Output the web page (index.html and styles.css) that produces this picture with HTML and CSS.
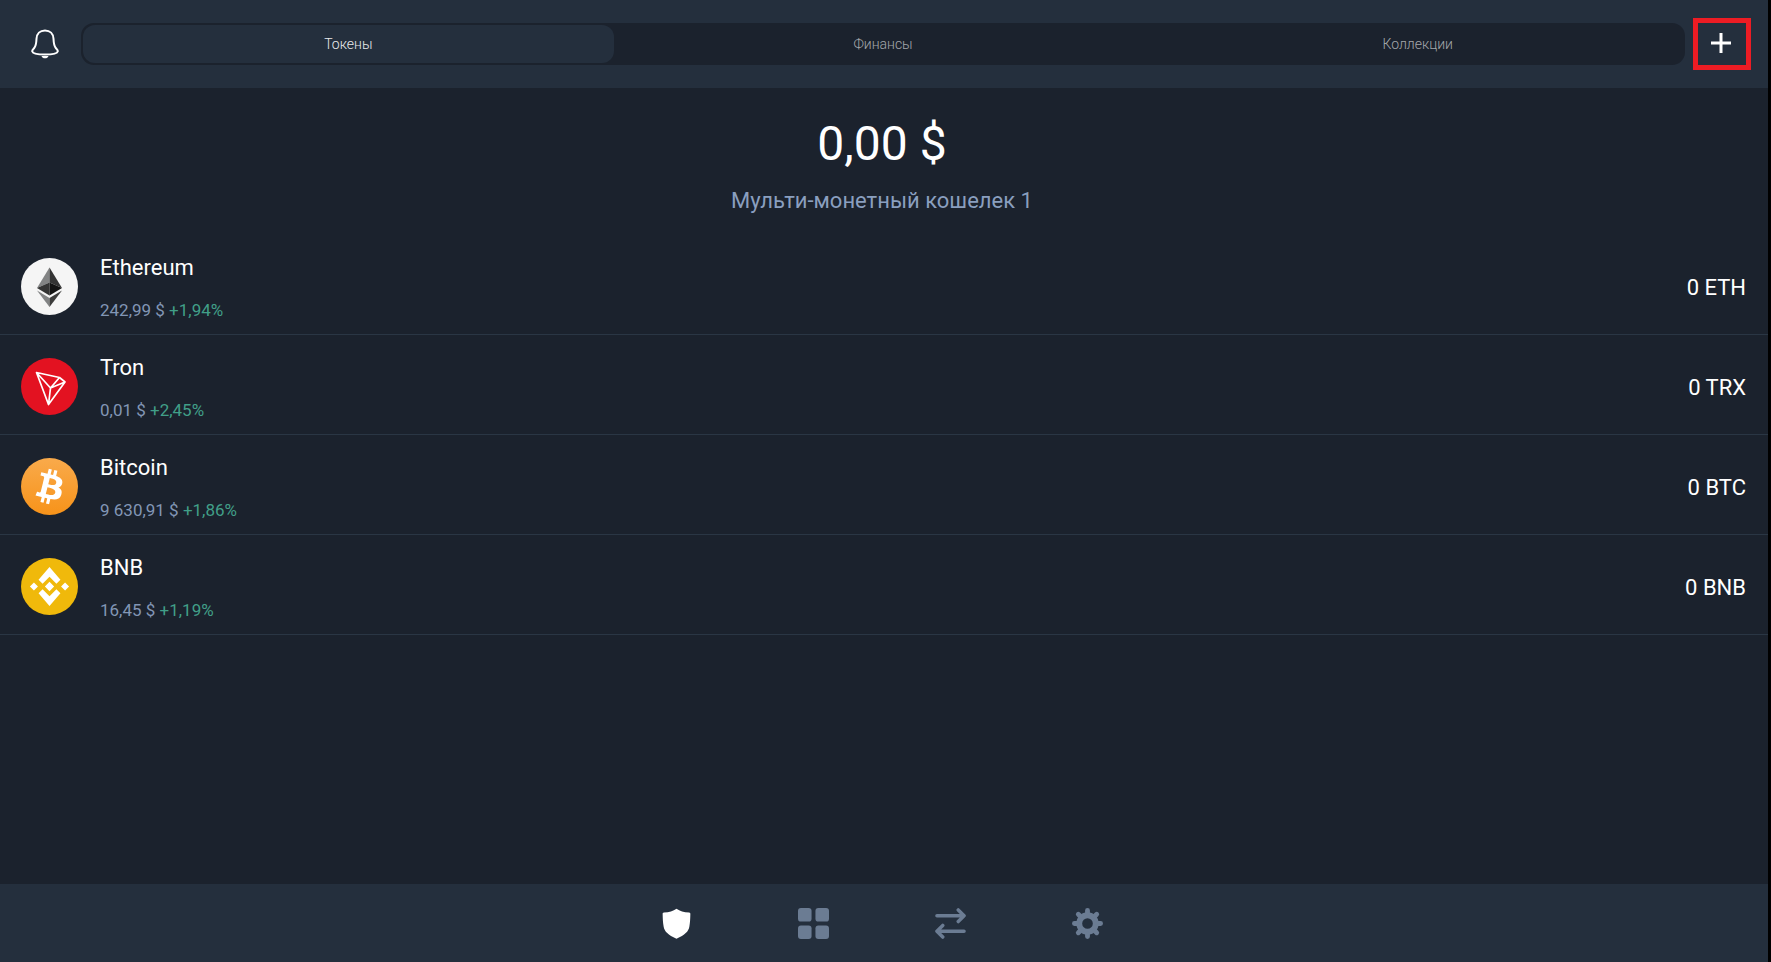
FILE: index.html
```html
<!DOCTYPE html>
<html lang="ru">
<head>
    <meta charset="UTF-8">
    <meta name="viewport" content="width=device-width, initial-scale=1.0">
    <title>Кошелек</title>
    <link rel="stylesheet" href="styles.css">
</head>
<body>
    <!-- Top bar -->
    <header class="top-bar">
        <button class="bell-button" type="button" aria-label="Уведомления">
            <svg width="28" height="30" viewBox="0 0 28 30">
                <path d="M14 1.5c-5 0-8.300 3.300-8.500 8.300-.2 5-.3 7-2.300 9.200C1.800 20.700 1 21.300 1.200 22.400c.4 2 6 3.200 12.800 3.200s12.400-1.200 12.800-3.200c.2-1.100-.6-1.700-2-3.400-2-2.200-2.100-4.200-2.300-9.200C22.300 4.800 19 1.500 14 1.500z" fill="none" stroke="#fff" stroke-width="2"/>
                <path d="M10.500 27h7c-.5 1.500-1.800 2.300-3.500 2.300s-3-.8-3.500-2.300z" fill="#fff"/>
            </svg>
        </button>
        <nav class="tabs">
            <button class="tab active" type="button">Токены</button>
            <button class="tab" type="button">Финансы</button>
            <button class="tab" type="button">Коллекции</button>
        </nav>
        <button class="add-button" type="button" aria-label="Добавить">
            <svg width="20" height="20" viewBox="0 0 20 20">
                <path d="M10 0v20M0 10h20" stroke="#fff" stroke-width="3"/>
            </svg>
        </button>
    </header>

    <main class="content">
        <!-- Balance -->
        <section class="balance">
            <h1>0,00 $</h1>
            <p>Мульти-монетный кошелек 1</p>
        </section>

        <!-- Token list -->
        <ul class="tokens">
            <li class="token">
                <svg class="coin" viewBox="0 0 57 57">
                    <circle cx="28.5" cy="28.5" r="28.5" fill="#f5f5f5"/>
                    <path d="M28.5 9.500L16 30l12.500-5.500z" fill="#828384"/>
                    <path d="M28.5 9.500L41 30l-12.500-5.500z" fill="#343434"/>
                    <path d="M16 30l12.500-5.500v13z" fill="#343434"/>
                    <path d="M41 30l-12.500-5.500v13z" fill="#131313"/>
                    <path d="M16 32.500l12.500 7.500v9z" fill="#828384"/>
                    <path d="M41 32.500L28.500 40v9z" fill="#3c3c3b"/>
                </svg>
                <div class="token-info">
                    <h2>Ethereum</h2>
                    <p>242,99 $ <span class="change">+1,94%</span></p>
                </div>
                <span class="amount">0 ETH</span>
            </li>
            <li class="token">
                <svg class="coin" viewBox="0 0 57 57">
                    <circle cx="28.5" cy="28.5" r="28.5" fill="#e31221"/>
                    <path d="M15.500 14.500L38.500 19.500 44 24 27.500 46.500zM15.500 14.500L29.500 30 44 24M29.500 30L38.500 19.500M29.500 30L27.500 46.500" fill="none" stroke="#fff" stroke-width="1.7" stroke-linejoin="round"/>
                </svg>
                <div class="token-info">
                    <h2>Tron</h2>
                    <p>0,01 $ <span class="change">+2,45%</span></p>
                </div>
                <span class="amount">0 TRX</span>
            </li>
            <li class="token">
                <svg class="coin" viewBox="0 0 32 32">
                    <defs>
                        <linearGradient id="btc" x1="0" y1="0" x2="0" y2="1">
                            <stop offset="0" stop-color="#f9aa4b"/>
                            <stop offset="1" stop-color="#f7931a"/>
                        </linearGradient>
                    </defs>
                    <circle cx="16" cy="16" r="16" fill="url(#btc)"/>
                    <path d="M23.189 14.020c.314-2.096-1.283-3.223-3.465-3.975l.708-2.840-1.728-.43-.690 2.765c-.454-.114-.920-.220-1.385-.326l.695-2.783L15.596 6l-.708 2.839c-.376-.086-.746-.170-1.104-.260l.002-.009-2.384-.595-.460 1.846s1.283.294 1.256.312c.7.175.826.638.805 1.006l-.806 3.235c.048.012.110.030.180.057l-.183-.045-1.130 4.532c-.086.212-.303.531-.793.410.018.025-1.256-.313-1.256-.313l-.858 1.978 2.250.561c.418.105.828.215 1.231.318l-.715 2.872 1.727.43.708-2.840c.472.127.930.245 1.378.357l-.706 2.828 1.728.43.715-2.866c2.948.558 5.164.333 6.097-2.333.752-2.146-.037-3.385-1.588-4.192 1.130-.260 1.980-1.003 2.207-2.538zm-3.950 5.538c-.533 2.147-4.148.986-5.320.695l.950-3.805c1.172.293 4.929.872 4.370 3.110zm.535-5.569c-.487 1.953-3.495.960-4.470.717l.860-3.450c.975.243 4.118.696 3.610 2.733z" fill="#fff"/>
                </svg>
                <div class="token-info">
                    <h2>Bitcoin</h2>
                    <p>9 630,91 $ <span class="change">+1,86%</span></p>
                </div>
                <span class="amount">0 BTC</span>
            </li>
            <li class="token">
                <svg class="coin" viewBox="0 0 32 32">
                    <circle cx="16" cy="16" r="16" fill="#f0b90b"/>
                    <path d="M12.116 14.404L16 10.520l3.886 3.886 2.260-2.260L16 5l-6.144 7.144zM5 16l2.260-2.260L9.520 16l-2.260 2.260zM12.116 17.596L16 21.480l3.886-3.886 2.260 2.260L16 27l-6.144-7.144zM22.480 16l2.260-2.260L27 16l-2.260 2.260zM13.400 16l2.600-2.600 2.600 2.600-2.600 2.600z" fill="#fff"/>
                </svg>
                <div class="token-info">
                    <h2>BNB</h2>
                    <p>16,45 $ <span class="change">+1,19%</span></p>
                </div>
                <span class="amount">0 BNB</span>
            </li>
        </ul>
    </main>

    <!-- Bottom navigation -->
    <nav class="bottom-nav">
        <button class="nav-button active" type="button" aria-label="Кошелек">
            <svg viewBox="0 0 32 32">
                <path d="M16 .8c3.500 2.500 7.500 3.700 13 3.900 1 .1 1.300.6 1.300 1.500-.1 5-.3 9-1 12.800-1 5.500-4.500 8.500-13.300 12.700C7.200 27.500 3.700 24.500 2.700 19c-.7-3.800-.9-7.800-1-12.800 0-.9.300-1.400 1.300-1.500C8.500 4.500 12.500 3.300 16 .8z"/>
            </svg>
        </button>
        <button class="nav-button" type="button" aria-label="Приложения">
            <svg viewBox="0 0 32 32">
                <rect x="0" y="0" width="14" height="14" rx="3"/>
                <rect x="18" y="0" width="14" height="14" rx="3"/>
                <rect x="0" y="18" width="14" height="14" rx="3"/>
                <rect x="18" y="18" width="14" height="14" rx="3"/>
            </svg>
        </button>
        <button class="nav-button" type="button" aria-label="Обмен">
            <svg viewBox="0 0 32 32">
                <path d="M2 8h28M24 2l6 6-6 6M30 24H2M8 18l-6 6 6 6" fill="none" stroke="currentColor" stroke-width="3.6" stroke-linecap="round" stroke-linejoin="round"/>
            </svg>
        </button>
        <button class="nav-button" type="button" aria-label="Настройки">
            <svg viewBox="0 0 32 32">
                <circle cx="16" cy="16" r="8.5" fill="none" stroke="currentColor" stroke-width="6"/>
                <path d="M16 5V2.500M16 27v2.500M5 16H2.500M27 16h2.500M8.200 8.200L6.500 6.500M23.800 23.800l1.700 1.700M23.800 8.200l1.700-1.700M8.200 23.800l-1.700 1.700" stroke="currentColor" stroke-width="5" stroke-linecap="round"/>
            </svg>
        </button>
    </nav>
</body>
</html>
```
FILE: styles.css
```css
* {
    box-sizing: border-box;
}

body {
    font-family: Roboto, "Noto Sans", sans-serif;
    margin: 0;
    min-height: 100vh;
    display: flex;
    flex-direction: column;
    background-color: #1b222d;
    border-right: 3px solid #000;
    color: #fff;
}

h1, h2, p, ul {
    margin: 0;
    padding: 0;
    font-weight: 400;
}

button {
    font-family: inherit;
    padding: 0;
    border: none;
    background: none;
    color: inherit;
    cursor: pointer;
}

svg {
    display: block;
}

/* Top bar */
.top-bar {
    display: flex;
    align-items: center;
    height: 88px;
    padding: 0 17px 0 31px;
    background-color: #242f3d;
}

.bell-button {
    margin-right: 22px;
}

.tabs {
    flex: 1;
    display: flex;
    gap: 4px;
    height: 42px;
    padding: 2px;
    border-radius: 13px;
    background-color: #1b222d;
}

.tab {
    flex: 1;
    border-radius: 12px;
    font-size: 14px;
    font-weight: 300;
    color: #a4a7ab;
}

.tab.active {
    background-color: #242f3d;
    color: #e9eaec;
}

.add-button {
    display: flex;
    align-items: center;
    justify-content: center;
    width: 58px;
    height: 52px;
    margin-left: 8px;
    padding: 0 2px 2px 0;
    border: 5px solid #ed1c24;
}

/* Balance */
.content {
    flex: 1;
}

.balance {
    padding: 28px 4px 19px 0;
    text-align: center;
}

.balance h1 {
    font-size: 48px;
    line-height: 56px;
}

.balance p {
    margin-top: 14px;
    font-size: 22px;
    line-height: 30px;
    color: #8a9fbf;
}

/* Token list */
.tokens {
    list-style: none;
}

.token {
    display: flex;
    align-items: center;
    height: 100px;
    padding: 4px 22px 0 21px;
    border-bottom: 1px solid #2a3644;
}

.coin {
    width: 57px;
    height: 57px;
    margin-right: 22px;
}

.token-info {
    flex: 1;
    padding-top: 2px;
}

.token-info h2 {
    font-size: 22px;
    line-height: 28px;
}

.token-info p {
    margin-top: 16px;
    font-size: 17px;
    line-height: 24px;
    color: #8296b5;
}

.token-info .change {
    color: #419f88;
}

.amount {
    padding-top: 2px;
    font-size: 22px;
    line-height: 28px;
}

/* Bottom navigation */
.bottom-nav {
    display: flex;
    justify-content: center;
    gap: 106px;
    height: 78px;
    padding-right: 4px;
    background-color: #242f3d;
}

.nav-button {
    color: #6b7c93;
}

.nav-button.active {
    color: #fff;
}

.nav-button svg {
    width: 31px;
    height: 31px;
    fill: currentColor;
}
```
